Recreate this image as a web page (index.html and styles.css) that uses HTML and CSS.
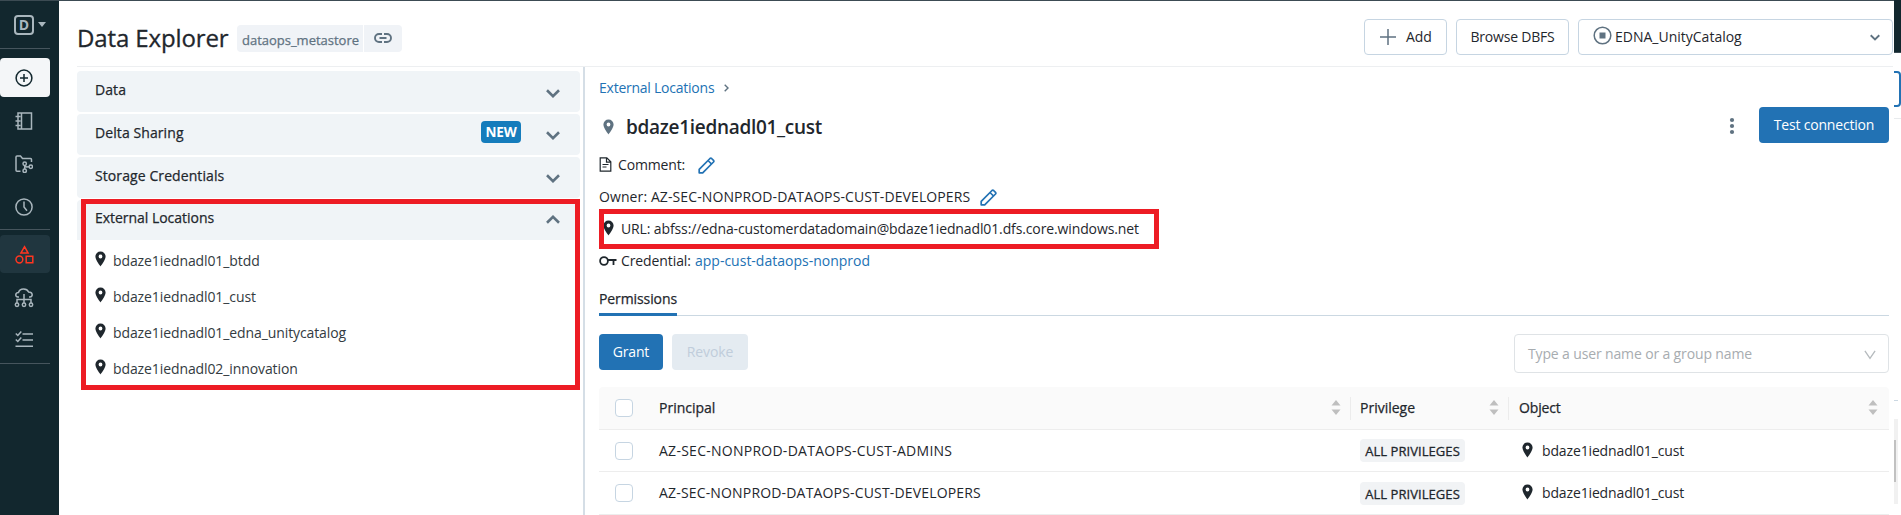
FILE: index.html
```html
<!DOCTYPE html>
<html lang="en">
<head>
<meta charset="utf-8">
<title>Data Explorer</title>
<link rel="stylesheet" href="styles.css">
</head>
<body>
<svg class="defs" width="0" height="0" aria-hidden="true">
  <symbol id="pin" viewBox="0 0 11 16"><path fill="currentColor" fill-rule="evenodd" d="M5.5.4A5.1 5.1 0 0 0 .4 5.5C.4 9 5.5 15.4 5.5 15.4S10.600 9 10.600 5.500A5.100 5.100 0 0 0 5.500.4ZM5.500 3.600A1.900 1.900 0 1 1 5.500 7.400A1.900 1.900 0 0 1 5.500 3.600Z"/></symbol>
  <symbol id="chev" viewBox="0 0 14 9"><path fill="none" stroke="currentColor" stroke-width="2.600" d="M1 1.300 7 7.200 13 1.300"/></symbol>
  <symbol id="pencil" viewBox="0 0 17 17"><path fill="none" stroke="currentColor" stroke-width="1.700" stroke-linejoin="round" d="M1.200 12.300 12 1.500Q12.800.8 13.600 1.500L15.500 3.400Q16.200 4.200 15.500 5L4.700 15.800H1.200ZM10 3.500 13.500 7"/></symbol>
  <symbol id="sort" viewBox="0 0 10 15"><path fill="currentColor" d="M5 0 9.500 5.500H.5ZM5 15 9.500 9.500H.5Z"/></symbol>
</svg>
<div class="app">
  <nav class="rail">
    <div class="brand"><span class="brand-box">D</span><i class="caret"></i></div>
    <div class="rail-item create"><svg width="18" height="18" viewBox="0 0 18 18"><circle cx="9" cy="9" r="7.900"/><path d="M9 5v8M5 9h8"/></svg></div>
    <div class="rail-item notebook"><svg width="18" height="18" viewBox="0 0 18 18"><path d="M3 1h13.500v16H3zM6.500 1v16M.5 4.500h5M.5 9h5M.5 13.500h5"/></svg></div>
    <div class="rail-item repos"><svg width="18" height="18" viewBox="0 0 18 18"><path d="M5.500 16.300H2Q1 16.300 1 15.300V2Q1 1 2 1H5.500L7.500 3.400H15.500Q16.500 3.400 16.500 4.400V7"/><circle cx="9.700" cy="8.700" r="1.700"/><circle cx="15.800" cy="11.700" r="1.700"/><circle cx="9.700" cy="15.800" r="1.700"/><path d="M9.700 10.400V14M14 11.700 11.500 12 9.700 10.400"/></svg></div>
    <div class="rail-item recent"><svg width="18" height="18" viewBox="0 0 18 18"><circle cx="9" cy="9" r="8.100"/><path d="M9 3.500V9l3 3.700"/></svg></div>
    <div class="rail-item data"><svg width="19" height="19" viewBox="0 0 19 19"><path d="M9.500 1.700 13.100 8.100H5.900ZM11.200 11.200h6.600v6.600h-6.600z"/><circle cx="4.400" cy="14.500" r="3.400"/></svg></div>
    <div class="rail-item compute"><svg width="20" height="20" viewBox="0 0 20 20"><path d="M5 9H4Q1.500 8.800 1.800 6.500 2.200 4.500 4.500 4.500 5.500 1 9.500 1 13.300 1 14.600 4 17.800 4 18.200 6.500 18.300 8.800 16 9H15M10 6v9M3 15v-3.500h14V15"/><circle cx="3" cy="16.800" r="1.700"/><circle cx="10" cy="16.800" r="1.700"/><circle cx="17" cy="16.800" r="1.700"/></svg></div>
    <div class="rail-item workflows"><svg width="18" height="18" viewBox="0 0 18 18"><path d="M7.500 4H18M7.500 10H18M.5 16.300H18M.8 3.500l2 2L6.300 1.500M.8 9.500l2 2L6.300 7.500"/></svg></div>
  </nav>

  <main class="main">
    <header class="top">
      <h1>Data Explorer</h1>
      <div class="metastore"><span class="meta-name">dataops_metastore</span><span class="meta-link"><svg width="18" height="10" viewBox="0 0 18 10"><path d="M8 1H5a4 4 0 0 0 0 8h3M10 1h3a4 4 0 0 1 0 8h-3M5.500 5h7"/></svg></span></div>
      <div class="actions">
        <button class="btn add"><svg width="16" height="16" viewBox="0 0 16 16"><path d="M8 0v16M0 8h16"/></svg>Add</button>
        <button class="btn browse">Browse DBFS</button>
        <div class="btn cluster"><svg class="stop" width="19" height="19" viewBox="0 0 19 19"><circle cx="9.500" cy="9.500" r="8.300"/><path d="M6.500 6.500h6v6h-6z"/></svg><span>EDNA_UnityCatalog</span><svg class="mini" width="10" height="7"><use href="#chev"/></svg></div>
      </div>
    </header>

    <div class="body">
      <aside class="side">
        <div class="sec"><span>Data</span><svg class="chev low" width="14" height="9"><use href="#chev"/></svg></div>
        <div class="sec"><span>Delta Sharing</span><b class="new">NEW</b><svg class="chev" width="14" height="9"><use href="#chev"/></svg></div>
        <div class="sec"><span>Storage Credentials</span><svg class="chev" width="14" height="9"><use href="#chev"/></svg></div>
        <div class="sec open"><span>External Locations</span><svg class="chev up" width="14" height="9"><use href="#chev"/></svg></div>
        <ul class="locs">
          <li><svg width="11" height="16"><use href="#pin"/></svg>bdaze1iednadl01_btdd</li>
          <li><svg width="11" height="16"><use href="#pin"/></svg>bdaze1iednadl01_cust</li>
          <li><svg width="11" height="16"><use href="#pin"/></svg>bdaze1iednadl01_edna_unitycatalog</li>
          <li><svg width="11" height="16"><use href="#pin"/></svg>bdaze1iednadl02_innovation</li>
        </ul>
        <div class="mark mark-locs"></div>
      </aside>

      <section class="detail">
        <div class="crumb"><a>External Locations</a><svg width="5" height="8" viewBox="0 0 5 8"><path d="M.7.7 4 4 .7 7.300"/></svg></div>
        <div class="title">
          <svg class="tpin" width="11" height="16"><use href="#pin"/></svg>
          <h2>bdaze1iednadl01_cust</h2>
          <svg class="kebab" width="6" height="18" viewBox="0 0 6 18"><circle cx="3" cy="3" r="2.100"/><circle cx="3" cy="9" r="2.100"/><circle cx="3" cy="15" r="2.100"/></svg>
          <button class="primary test">Test connection</button>
        </div>
        <div class="row comment"><svg class="doc" width="13" height="15" viewBox="0 0 13 15"><path d="M1.200.8h6.600l4 4v9.400H1.200zM7.500.8v4.400h4.300M3.500 7.500h6M3.500 10h4"/></svg><span>Comment:</span><svg class="pen" width="17" height="17"><use href="#pencil"/></svg></div>
        <div class="row owner"><span>Owner: AZ-SEC-NONPROD-DATAOPS-CUST-DEVELOPERS</span><svg class="pen" width="17" height="17"><use href="#pencil"/></svg></div>
        <div class="row url"><svg class="upin" width="11" height="16"><use href="#pin"/></svg><span>URL: abfss://edna-customerdatadomain@bdaze1iednadl01.dfs.core.windows.net</span><div class="mark mark-url"></div></div>
        <div class="row cred"><svg class="key" width="18" height="10" viewBox="0 0 18 10"><circle cx="5" cy="5" r="3.900"/><path d="M9 4h8.500M14.500 4v5"/></svg><span>Credential:</span><a>app-cust-dataops-nonprod</a></div>
        <div class="tabs"><span class="tab">Permissions</span></div>
        <div class="controls">
          <button class="primary grant">Grant</button>
          <button class="revoke" disabled>Revoke</button>
          <div class="picker"><span>Type a user name or a group name</span><svg width="12" height="10" viewBox="0 0 12 10"><path d="M.9.800 6 8.300 11.100.8"/></svg></div>
        </div>
        <div class="table">
          <div class="tr th">
            <i class="check"></i>
            <div class="cell principal">Principal<svg class="sort" width="10" height="15"><use href="#sort"/></svg></div>
            <div class="cell priv">Privilege<svg class="sort" width="10" height="15"><use href="#sort"/></svg></div>
            <div class="cell obj">Object<svg class="sort" width="10" height="15"><use href="#sort"/></svg></div>
          </div>
          <div class="tr">
            <i class="check"></i><div class="cell principal wide">AZ-SEC-NONPROD-DATAOPS-CUST-ADMINS</div>
            <div class="cell priv"><span class="tag">ALL PRIVILEGES</span></div>
            <div class="cell obj"><svg class="opin" width="11" height="16"><use href="#pin"/></svg>bdaze1iednadl01_cust</div>
          </div>
          <div class="tr last">
            <i class="check"></i><div class="cell principal">AZ-SEC-NONPROD-DATAOPS-CUST-DEVELOPERS</div>
            <div class="cell priv"><span class="tag">ALL PRIVILEGES</span></div>
            <div class="cell obj"><svg class="opin" width="11" height="16"><use href="#pin"/></svg>bdaze1iednadl01_cust</div>
          </div>
        </div>
      </section>
    </div>
  </main>

  <div class="edge">
    <div class="edge-dark"></div>
    <div class="edge-btn"></div>
    <div class="edge-line"></div>
    <div class="edge-tab"></div>
    <div class="edge-scroll"><div class="edge-thumb"></div></div>
  </div>
</div>
</body>
</html>
```
FILE: styles.css
```css
* { box-sizing: border-box; }
body { margin: 0; background: #fff; color: #1f272d; font: 14px/20px "Open Sans", "Noto Sans", sans-serif; overflow: hidden; }
h1, h2, ul { margin: 0; padding: 0; list-style: none; }
button { font: inherit; margin: 0; padding: 0; }
svg { display: block; flex: none; }
span, a { white-space: nowrap; }
a { color: #2272b4; }
.defs { position: absolute; }
.app { display: grid; grid-template-columns: 59px 1835px 7px; height: 515px; }

/* navigation rail */
.rail { background: #12272e; border-top: 1px solid #3c4b53; color: #a9b6bd; }
.rail svg { fill: none; stroke: currentColor; stroke-width: 1.500; }
.brand { display: flex; align-items: center; width: 50px; height: 48px; padding: 0 0 0 14px; border-bottom: 1px solid #46555d; }
.brand-box { width: 20px; height: 20px; border: 2px solid #a9b6bd; border-radius: 4px; font-size: 14px; font-weight: 700; line-height: 16px; text-align: center; }
.caret { margin: 0 0 0 4px; border: 4px solid transparent; border-top: 5px solid #a9b6bd; border-bottom: 0; }
.rail-item { display: flex; align-items: center; justify-content: center; width: 50px; height: 43px; padding-right: 2px; }
.rail-item.create { height: 39px; margin: 9px 0 2px; background: #f4f6f8; border-radius: 4px; color: #12272e; }
.rail-item.recent { height: 45px; border-bottom: 1px solid #46555d; }
.rail-item.data { height: 38px; margin: 5px 0 3px; background: #20363f; border-radius: 4px; color: #ff3621; }
.rail-item.workflows { height: 45px; border-bottom: 1px solid #46555d; padding-bottom: 4px; }

/* header */
.main { border-top: 1px solid #3c4b53; padding-left: 18px; min-width: 0; }
.top { display: flex; height: 66px; width: 1816px; border-bottom: 1px solid #edeff1; }
h1 { width: 160px; padding-top: 17px; font-size: 24px; line-height: 40px; font-weight: 400; letter-spacing: -.12px; -webkit-text-stroke: .3px; white-space: nowrap; height: 60px; }
.metastore { display: flex; gap: 1px; height: 27px; margin-top: 24px; color: #5f7281; -webkit-text-stroke: .25px; }
.metastore span { background: #f0f3f7; }
.meta-name { width: 126px; padding-left: 5px; font-size: 13px; line-height: 31px; letter-spacing: -.01px; border-radius: 4px 0 0 4px; }
.meta-link { display: flex; align-items: center; justify-content: center; width: 38px; border-radius: 0 4px 4px 0; }
.meta-link svg { fill: none; stroke: #5f7281; stroke-width: 1.900; margin-bottom: 1px; }
.actions { display: flex; gap: 9px; margin: 18px 0 0 auto; }
.btn { height: 36px; border: 1px solid #c6d5e2; border-radius: 4px; background: #fff; color: #1f272d; display: flex; align-items: center; }
.add { width: 83px; padding-left: 15px; gap: 10px; letter-spacing: -.1px; }
.add svg { stroke: #5f7281; stroke-width: 1.500; }
.browse { width: 113px; justify-content: center; letter-spacing: -.2px; }
.cluster { width: 315px; padding: 0 12px 0 14px; }
.cluster .stop { margin: -3px 3px 0 0; fill: none; stroke: #5f7281; stroke-width: 1.500; }
.stop path { fill: #5f7281; stroke: none; }
.mini { margin-left: auto; color: #5f7281; }

/* object browser */
.body { display: flex; height: 448px; }
.side { position: relative; width: 508px; padding: 4px 4px 0 0; border-right: 2px solid #d5dee6; }
.sec { display: flex; width: 503px; height: 41px; margin-bottom: 2px; padding: 0 20px 0 18px; background: #f0f4f7; border-radius: 4px; line-height: 37px; letter-spacing: .09px; -webkit-text-stroke: .25px; }
.chev { margin: 17px 0 0 auto; color: #5f7281; -webkit-text-stroke: 0; }
.chev.low { margin-top: 18px; }
.chev.up { transform: scaleY(-1); margin-top: 15px; }
.sec.open { height: 40px; margin: 0; line-height: 36px; border-radius: 4px 4px 0 0; letter-spacing: -.03px; }
.new { width: 40px; height: 22px; margin: 7px 0 0 auto; background: #157cbc; border-radius: 4px; color: #fff; font-size: 13.500px; font-weight: 700; line-height: 23px; text-align: center; letter-spacing: -.2px; -webkit-text-stroke: 0; }
.new + .chev { margin-left: 25px; }
.locs { padding: 3px 0 0 18px; }
.locs li { display: flex; align-items: center; height: 36px; gap: 7px; letter-spacing: -.1px; color: #333b41; }
.locs svg { color: #1f272d; margin-top: -5px; }
.mark { position: absolute; border: 5px solid #ed1c24; }
.mark-locs { left: 4px; top: 132px; width: 499px; height: 191px; }

/* location detail */
.detail { width: 1304px; padding-left: 14px; }
.crumb { display: flex; align-items: center; height: 41px; gap: 10px; letter-spacing: -.24px; }
.crumb svg { fill: none; stroke: #5f7281; stroke-width: 1.400; margin-top: 1px; }
.title { display: flex; align-items: center; height: 37px; margin-bottom: 4px; padding-left: 4px; }
.tpin { color: #5f7281; margin-right: 12px; }
h2 { font-size: 19px; font-weight: 600; line-height: 37px; letter-spacing: -.3px; margin-top: 2px; }
.kebab { margin-left: auto; margin-right: 24px; fill: #5f7281; margin-top: -1px; }
.primary { height: 36px; border: 0; border-radius: 4px; background: #2272b4; color: #fff; letter-spacing: -.2px; }
.test { width: 130px; margin-top: -3px; }
.row { display: flex; align-items: center; height: 32px; }
.comment { letter-spacing: -.15px; }
.doc { fill: none; stroke: #1f272d; stroke-width: 1.200; margin: -2px 6px 0 0; }
.pen { color: #2272b4; }
.comment .pen { margin-left: 13px; }
.owner { letter-spacing: .1px; }
.owner .pen { margin-left: 10px; }
.url { position: relative; letter-spacing: -.12px; }
.upin { margin: -2px 7px 0 4px; }
.mark-url { left: 0; top: -4px; width: 560px; height: 40px; }
.key { fill: none; stroke: #1f272d; stroke-width: 1.800; margin-right: 4px; }
.cred span { width: 74px; letter-spacing: -.1px; }
.tabs { height: 39px; border-bottom: 1px solid #cbd8e2; width: 1290px; }
.tab { display: inline-block; width: 78px; height: 39px; padding-top: 12px; border-bottom: 3px solid #2272b4; letter-spacing: -.1px; -webkit-text-stroke: .25px; }
.controls { display: flex; height: 71px; padding-top: 18px; width: 1290px; }
.grant { width: 64px; }
.revoke { width: 76px; height: 36px; margin-left: 9px; border: 0; border-radius: 4px; background: #e4ebf1; color: #c0cddb; letter-spacing: -.1px; }
.picker { display: flex; align-items: center; width: 375px; height: 39px; margin-left: auto; padding: 0 12px 0 13px; border: 1px solid #dfe3e6; border-radius: 4px; color: #a7acb0; letter-spacing: -.14px; }
.picker svg { margin-left: auto; fill: none; stroke: #b5babd; stroke-width: 1.300; margin-top: 3px; }

/* permissions table */
.table { width: 1290px; }
.tr { display: grid; grid-template-columns: 60px 692px 158px 380px; align-items: center; height: 42px; border-bottom: 1px solid #ededed; }
.tr.last { height: 43px; }
.th { height: 43px; background: #fafafa; border-radius: 4px 4px 0 0; -webkit-text-stroke: .25px; }
.check { width: 18px; height: 18px; margin-left: 16px; border: 1px solid #c6d5e2; border-radius: 4px; background: #fff; }
.cell { display: flex; align-items: center; white-space: nowrap; height: 23px; }
.tr:not(.th) .principal { letter-spacing: .17px; }
.tr:not(.th) .principal.wide { letter-spacing: .26px; }
.th .principal, .th .priv { border-right: 1px solid #ececec; }
.sort { margin: -2px 9px 0 auto; color: #bfbfbf; -webkit-text-stroke: 0; }
.obj .sort { margin-right: 11px; }
.priv { padding-left: 9px; }
.tag { width: 105px; height: 23px; border-radius: 4px; background: #f1f3f5; font-size: 13px; line-height: 24px; text-align: center; letter-spacing: .06px; -webkit-text-stroke: .3px; }
.obj { padding-left: 10px; letter-spacing: -.14px; }
.opin { margin: -2px 9px 0 3px; }

/* strip visible beyond the page edge */
.edge-dark { height: 53px; background: #12272e; border-bottom: 1px solid #3c4b53; }
.edge-btn { height: 36px; margin-top: 18px; border: 2px solid #2272b4; border-left: 0; border-radius: 0 4px 4px 0; }
.edge-line { height: 12px; border-bottom: 1px solid #e8ebed; }
.edge-tab { width: 4px; height: 282px; border-bottom: 1px solid #cbd8e2; }
.edge-scroll { width: 4px; height: 85px; margin-top: 18px; padding-top: 21px; background: #f1f1f1; }
.edge-thumb { width: 2px; height: 42px; background: #c1c1c1; }
```
